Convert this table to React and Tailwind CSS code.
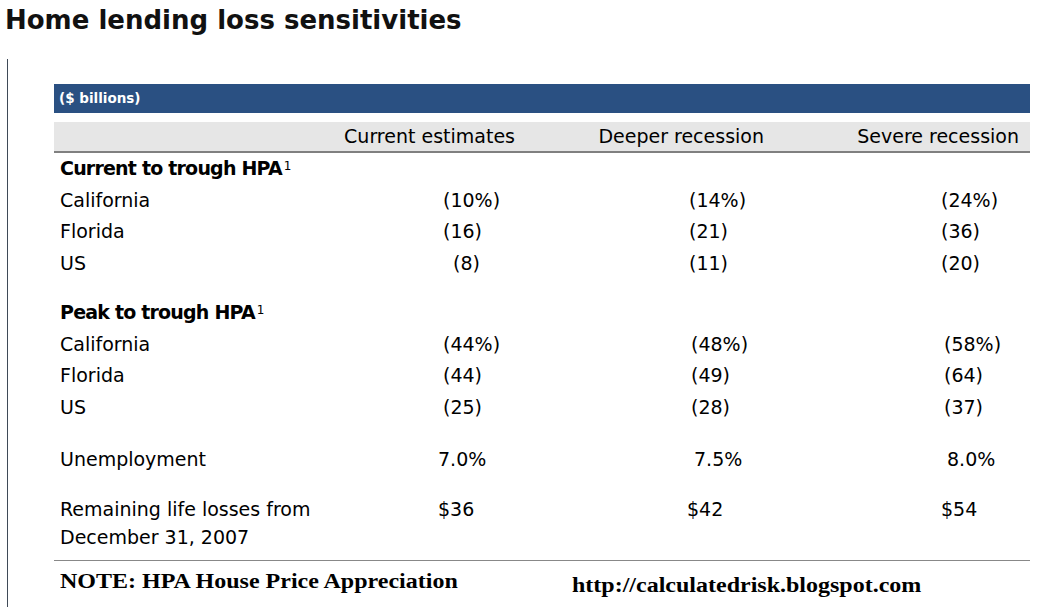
import React from "react";

const groups = [
  {
    title: "Current to trough HPA",
    rows: [
      { label: "California", v: [["(10%)", ""], ["(14%)", ""], ["(24%)", ""]] },
      { label: "Florida", v: [["(16)", ""], ["(21)", ""], ["(36)", ""]] },
      { label: "US", v: [["(8)", "pl-[10px]"], ["(11)", ""], ["(20)", ""]] },
    ],
  },
  {
    title: "Peak to trough HPA",
    rows: [
      { label: "California", v: [["(44%)", ""], ["(48%)", "pl-[2px]"], ["(58%)", "pl-[3px]"]] },
      { label: "Florida", v: [["(44)", ""], ["(49)", "pl-[2px]"], ["(64)", "pl-[3px]"]] },
      { label: "US", v: [["(25)", ""], ["(28)", "pl-[2px]"], ["(37)", "pl-[3px]"]] },
    ],
  },
];

function Row({ label, v, extra = "" }) {
  return (
    <div className={"grid grid-cols-[383px_246px_252px_1fr] pl-[6px] h-[31.67px] leading-[31.67px] " + extra}>
      <div>{label}</div>
      {v.map(([t, c], i) => (
        <div key={i} className={c}>
          {t}
        </div>
      ))}
    </div>
  );
}

export default function App() {
  return (
    <div className="w-[1051px] h-[607px] overflow-hidden bg-white text-black font-['DejaVu_Sans',sans-serif]">
      <h1 className="pl-[5px] h-[40px] leading-[40px] text-[26px] font-bold text-[#111]">
        Home lending loss sensitivities
      </h1>
      <div className="ml-[7px] mt-[19px] border-l border-[#3f4a57] h-[548px] pl-[46px] pt-[25px]">
        <div className="w-[976px] text-[19px]">
          <div className="h-[29px] bg-[#2a5082] flex items-center pl-[5px] text-white text-[13.5px] font-bold">
            ($ billions)
          </div>
          <div className="mt-[9px] h-[31px] bg-[#e6e6e6] border-b-2 border-[#808080] flex leading-[29px]">
            <div className="w-[461px] text-right">Current estimates</div>
            <div className="w-[249px] text-right">Deeper recession</div>
            <div className="w-[255px] text-right">Severe recession</div>
          </div>
          {groups.map((g, gi) => (
            <div key={gi} className={gi === 1 ? "mt-[17.5px]" : ""}>
              <div className="pl-[6px] h-[31.67px] leading-[31.67px] font-bold tracking-[-0.8px]">
                {g.title}
                <sup className="text-[12px] font-normal -top-[5px] ml-[2px] tracking-normal">1</sup>
              </div>
              {g.rows.map((r, ri) => (
                <Row key={ri} label={r.label} v={r.v} />
              ))}
            </div>
          ))}
          <Row
            label="Unemployment"
            v={[["7.0%", "-ml-[5px]"], ["7.5%", "pl-[5px]"], ["8.0%", "pl-[6px]"]]}
            extra="mt-[20px]"
          />
          <div className="mt-[20px] pb-[9px] border-b border-[#888888] grid grid-cols-[383px_246px_252px_1fr] pl-[6px] leading-[28px]">
            <div>
              Remaining life losses from
              <br />
              December 31, 2007
            </div>
            <div className="-ml-[5px]">$36</div>
            <div className="-ml-[2px]">$42</div>
            <div>$54</div>
          </div>
          <div className="flex items-start font-['Liberation_Serif','Times_New_Roman',serif] font-bold text-[20px] text-black">
            <div className="w-[518px] pl-[6px] h-[40px] leading-[40px]">
              <span className="inline-block scale-x-[1.2] origin-left whitespace-nowrap">
                NOTE: HPA House Price Appreciation
              </span>
            </div>
            <div className="pt-[4px] h-[40px] leading-[40px]">
              <span className="inline-block scale-x-[1.2] origin-left whitespace-nowrap">
                http://calculatedrisk.blogspot.com
              </span>
            </div>
          </div>
        </div>
      </div>
    </div>
  );
}
